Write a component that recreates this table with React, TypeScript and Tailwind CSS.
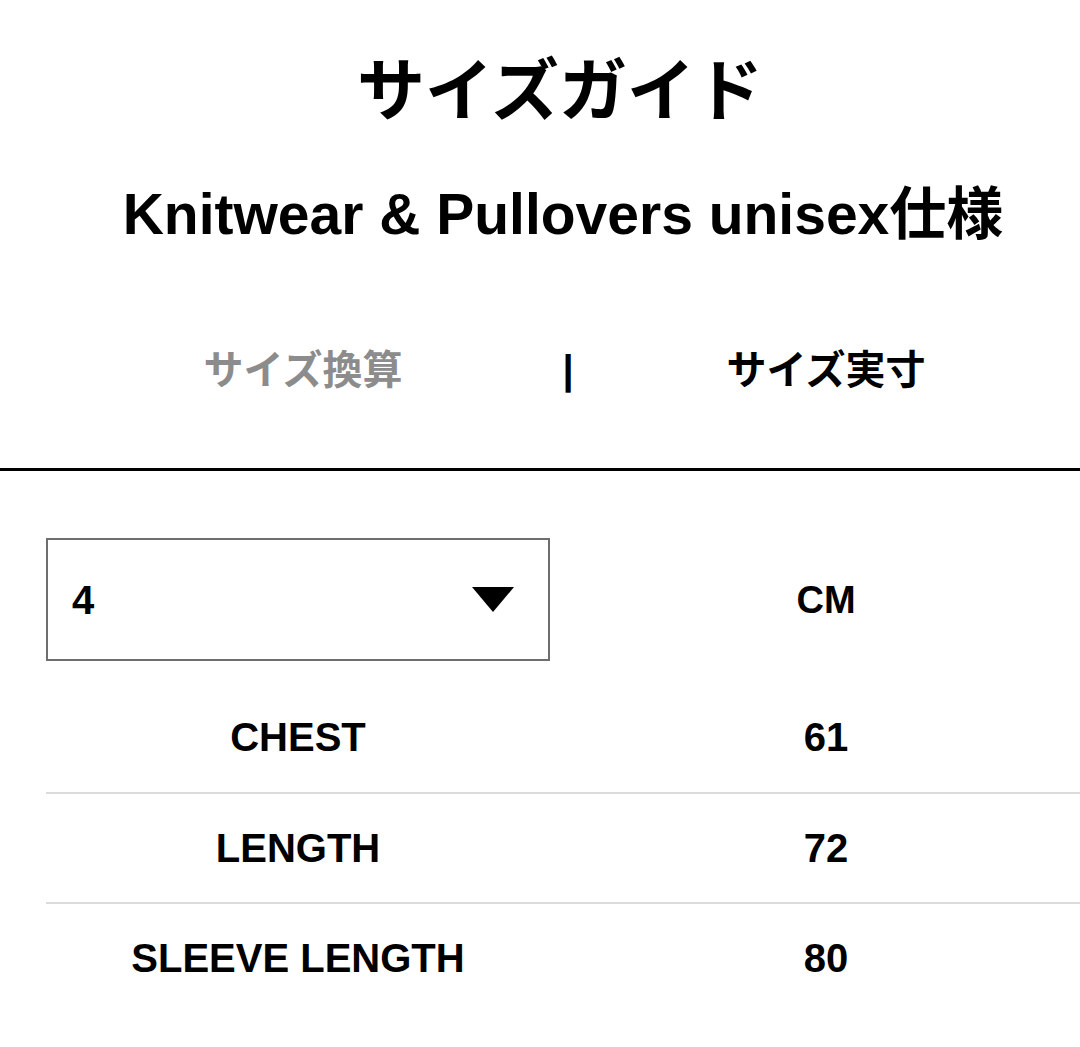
const font = { fontFamily: '"Liberation Sans", "Noto Sans CJK JP", sans-serif' };

const rows = [
  { label: "CHEST", value: "61" },
  { label: "LENGTH", value: "72" },
  { label: "SLEEVE LENGTH", value: "80" },
];

export default function App() {
  return (
    <div className="w-[1080px] h-[1047px] bg-white overflow-hidden text-black" style={font}>
      {/* heading */}
      <div className="pl-[40px]">
        <div className="h-[182px] flex items-center justify-center">
          <h1 className="text-[68px] leading-none font-bold">サイズガイド</h1>
        </div>
        <div className="h-[64px] flex items-center justify-center pl-[6px]">
          <h2 className="text-[57px] leading-none font-bold whitespace-nowrap">Knitwear &amp; Pullovers unisex仕様</h2>
        </div>
      </div>

      {/* tabs */}
      <div className="mt-[74px] h-[100px] flex items-center pl-[46px]">
        <button className="w-[514px] text-center text-[40px] leading-none font-bold text-[#8c8c8c]">サイズ換算</button>
        <span className="w-[16px] text-center text-[40px] leading-none font-bold">|</span>
        <button className="w-[500px] text-center text-[40px] leading-none font-bold">サイズ実寸</button>
      </div>
      <div className="mt-[48px] h-[3px] bg-black" />

      {/* table */}
      <div className="pl-[46px] pt-[67px]">
        <div className="grid grid-cols-[504px_1fr] items-center">
          <div className="h-[123px] border-2 border-[#6e6e6e] flex items-center justify-between pl-[24px] pr-[34px]">
            <span className="text-[40px] leading-none font-bold">4</span>
            <svg width="42" height="25" viewBox="0 0 42 25" className="fill-black">
              <polygon points="0,0 42,0 21,25" />
            </svg>
          </div>
          <div className="pl-[22px] text-center text-[38px] leading-none font-bold">CM</div>
        </div>

        <div className="mt-[21px]">
          {rows.map((r, i) => (
            <div
              key={r.label}
              className={`grid grid-cols-[504px_1fr] items-center h-[110px] ${i > 0 ? "border-t-2 border-[#dcdcdc]" : ""}`}
            >
              <div className="text-center text-[40px] leading-none font-bold">{r.label}</div>
              <div className="pl-[22px] text-center text-[40px] leading-none font-bold">{r.value}</div>
            </div>
          ))}
        </div>
      </div>
    </div>
  );
}
